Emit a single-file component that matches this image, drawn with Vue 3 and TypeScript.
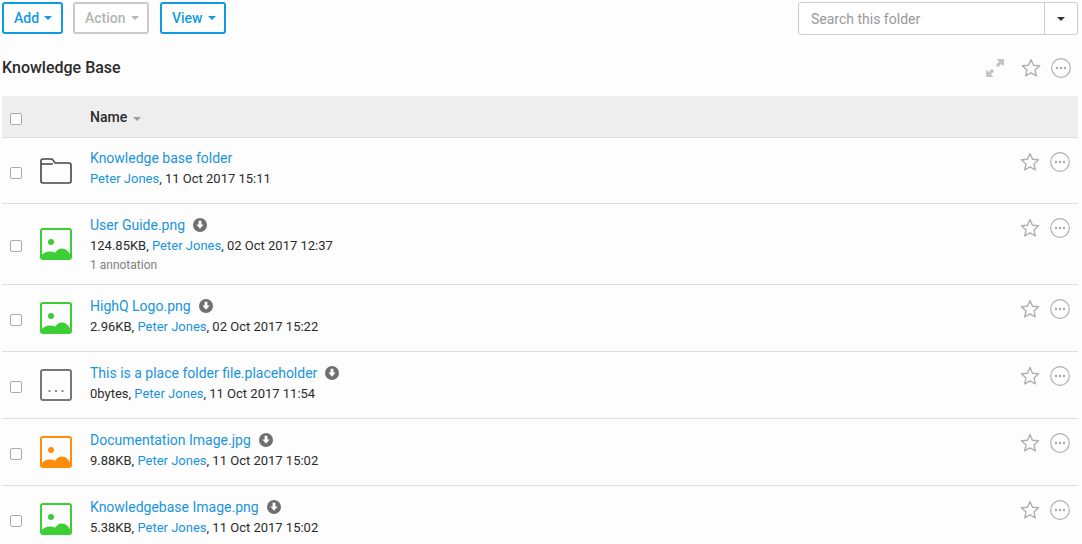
<script setup lang="ts">
interface Row {
  name: string
  kind: 'folder' | 'green' | 'orange' | 'other'
  size?: string
  date: string
  note?: string
}

const rows: Row[] = [
  { name: 'Knowledge base folder', kind: 'folder', date: '11 Oct 2017 15:11' },
  { name: 'User Guide.png', kind: 'green', size: '124.85KB', date: '02 Oct 2017 12:37', note: '1 annotation' },
  { name: 'HighQ Logo.png', kind: 'green', size: '2.96KB', date: '02 Oct 2017 15:22' },
  { name: 'This is a place folder file.placeholder', kind: 'other', size: '0bytes', date: '11 Oct 2017 11:54' },
  { name: 'Documentation Image.jpg', kind: 'orange', size: '9.88KB', date: '11 Oct 2017 15:02' },
  { name: 'Knowledgebase Image.png', kind: 'green', size: '5.38KB', date: '11 Oct 2017 15:02' }
]

const starPath = 'M10 1.6l2.5 5.6 6.1.6-4.6 4.1 1.3 6-5.3-3.1-5.3 3.1 1.3-6L1.4 7.8l6.1-.6z'
</script>

<template>
  <div class="page">
    <div class="toolbar">
      <div class="btns">
        <button class="btn">Add<i class="caret"></i></button>
        <button class="btn off">Action<i class="caret"></i></button>
        <button class="btn">View<i class="caret"></i></button>
      </div>
      <div class="search">
        <span class="placeholder">Search this folder</span>
        <span class="search-drop"><i class="caret dark"></i></span>
      </div>
    </div>

    <div class="title-row">
      <h1>Knowledge Base</h1>
      <div class="title-tools">
        <svg class="expand" width="20" height="20" viewBox="0 0 20 20">
          <path fill="#c4c4c4" d="M11.500 1h7.500v7.500l-2.600-2.600-3.300 3.300-2.300-2.300 3.300-3.300zM8.500 19H1v-7.500l2.600 2.600 3.300-3.300 2.300 2.300-3.300 3.300z" />
        </svg>
        <svg class="star" width="20" height="20" viewBox="0 0 20 20">
          <path :d="starPath" fill="none" stroke="#b0b0b0" stroke-width="1.400" stroke-linejoin="round" />
        </svg>
        <svg class="more" width="20" height="20" viewBox="0 0 20 20">
          <circle cx="10" cy="10" r="9.300" fill="none" stroke="#b0b0b0" stroke-width="1.200" />
          <circle cx="6" cy="10" r="1.200" fill="#a8a8a8" />
          <circle cx="10" cy="10" r="1.200" fill="#a8a8a8" />
          <circle cx="14" cy="10" r="1.200" fill="#a8a8a8" />
        </svg>
      </div>
    </div>

    <div class="thead">
      <span class="check"></span>
      <span class="name-head">Name<i class="caret grey"></i></span>
    </div>

    <div v-for="row in rows" :key="row.name" class="row" :class="{ tall: row.note, first: row.kind === 'folder' }">
      <span class="check"></span>
      <div class="file-icon">
        <svg v-if="row.kind === 'folder'" width="32" height="26" viewBox="0 0 32 26">
          <path d="M1 6V3a2 2 0 0 1 2-2h8c.9 0 1.500.4 2 1.100L15 5h14a2 2 0 0 1 2 2v16a2 2 0 0 1-2 2H3a2 2 0 0 1-2-2zM1 6h12" fill="none" stroke="#444" stroke-width="1.600" />
        </svg>
        <svg v-else-if="row.kind === 'other'" width="32" height="32" viewBox="0 0 32 32">
          <rect x="1" y="1" width="30" height="30" rx="2" fill="none" stroke="#777" stroke-width="2" />
          <circle cx="9.500" cy="22" r="1.100" fill="#777" />
          <circle cx="16" cy="22" r="1.100" fill="#777" />
          <circle cx="22.500" cy="22" r="1.100" fill="#777" />
        </svg>
        <svg v-else width="32" height="32" viewBox="0 0 32 32" :class="row.kind">
          <rect x="1" y="1" width="30" height="30" rx="2" fill="none" stroke="currentColor" stroke-width="2" />
          <circle cx="11" cy="14" r="3" fill="currentColor" />
          <path d="M1 31v-3c2-2.500 5-4.500 9-4.500 2 0 3.500.5 5 1.200 2-2.700 4-4.200 7-4.200 4 0 7 3 9 8V31z" fill="currentColor" />
        </svg>
      </div>
      <div class="info">
        <div class="file-name">
          <a>{{ row.name }}</a>
          <svg v-if="row.kind !== 'folder'" class="dl" width="14" height="14" viewBox="0 0 14 14">
            <circle cx="7" cy="7" r="7" fill="#6f6f6f" />
            <path d="M5.600 2.800h2.800v3.700h2.200L7 10.800 3.400 6.500h2.200z" fill="#fff" />
          </svg>
        </div>
        <div class="meta"><template v-if="row.size">{{ row.size }}, </template><a>Peter Jones</a>, {{ row.date }}</div>
        <div v-if="row.note" class="note">{{ row.note }}</div>
      </div>
      <div class="row-tools">
        <svg width="20" height="20" viewBox="0 0 20 20">
          <path :d="starPath" fill="none" stroke="#b0b0b0" stroke-width="1.400" stroke-linejoin="round" />
        </svg>
        <svg width="20" height="20" viewBox="0 0 20 20">
          <circle cx="10" cy="10" r="9.300" fill="none" stroke="#b0b0b0" stroke-width="1.200" />
          <circle cx="6" cy="10" r="1.200" fill="#a8a8a8" />
          <circle cx="10" cy="10" r="1.200" fill="#a8a8a8" />
          <circle cx="14" cy="10" r="1.200" fill="#a8a8a8" />
        </svg>
      </div>
    </div>
  </div>
</template>

<style>
html, body {
  background: #fdfdfd;
  overflow: hidden;
}
</style>

<style scoped>
.page {
  height: 544px;
  overflow: hidden;
  padding: 2px 4px 0 2px;
  box-sizing: border-box;
  font-family: Roboto, "Liberation Sans", sans-serif;
  font-size: 14px;
  color: #2b2b2b;
}

.toolbar {
  display: flex;
  justify-content: space-between;
  align-items: flex-start;
}

.btns {
  display: flex;
  gap: 10px;
}

.btn {
  height: 32px;
  padding: 0 10px;
  border: 2px solid #0f9be0;
  border-radius: 3px;
  background: #fff;
  color: #0f9be0;
  font: 500 14px Roboto, sans-serif;
  display: flex;
  align-items: center;
}
.btn:nth-child(1) { width: 61px; }
.btn:nth-child(2) { width: 76px; margin-right: 1px; }
.btn:nth-child(3) { width: 66px; }

.btn.off {
  border-color: #cacaca;
  color: #b5b5b5;
}

.caret {
  display: inline-block;
  margin-left: 5px;
  border-top: 4px solid currentColor;
  border-left: 4px solid transparent;
  border-right: 4px solid transparent;
}
.caret.dark { color: #333; margin: 0; }
.caret.grey { color: #999; margin-left: 6px; position: relative; top: -1px; }

.search {
  width: 280px;
  height: 33px;
  border: 1px solid #ccc;
  border-radius: 3px;
  background: #fff;
  box-sizing: border-box;
  display: flex;
  align-items: center;
}

.placeholder {
  flex: 1;
  padding-left: 12px;
  color: #999;
}

.search-drop {
  width: 32px;
  height: 100%;
  border-left: 1px solid #ccc;
  display: flex;
  align-items: center;
  justify-content: center;
}

.title-row {
  height: 61px;
  padding-top: 4px;
  box-sizing: border-box;
  display: flex;
  justify-content: space-between;
  align-items: center;
}

h1 {
  margin: 0;
  font-size: 16px;
  font-weight: 500;
  color: #2b2b2b;
}

.title-tools {
  display: flex;
  align-items: center;
  padding-right: 7px;
}
.star { margin-left: 16px; }
.more { margin-left: 10px; }

.thead {
  height: 42px;
  background: #eee;
  border-bottom: 1px solid #ddd;
  box-sizing: border-box;
  display: flex;
  align-items: center;
}

.check {
  flex: none;
  width: 12px;
  height: 12px;
  margin: 4px 0 0 8px;
  box-sizing: border-box;
  border: 1px solid #aaa;
  border-radius: 2px;
  background: #fff;
}

.name-head {
  margin-left: 68px;
  font-weight: 500;
  color: #2b2b2b;
}

.row {
  height: 67px;
  border-bottom: 1px solid #ddd;
  box-sizing: border-box;
  display: flex;
  align-items: center;
}
.row.first { height: 66px; }
.row.tall { height: 81px; }

.file-icon {
  flex: none;
  width: 32px;
  margin-left: 18px;
  display: flex;
  justify-content: center;
}
.green { color: #3bce35; }
.orange { color: #ff8c0a; }

.info {
  flex: 1;
  margin-left: 18px;
  line-height: 20px;
  align-self: flex-start;
  padding-top: 11px;
}
.first .info { padding-top: 10px; }

a {
  color: #1a94dc;
}

.file-name {
  display: flex;
  align-items: center;
  gap: 8px;
  height: 20px;
}

.meta {
  margin-top: 1px;
  font-size: 13px;
}

.note {
  margin-top: -1px;
  font-size: 12px;
  color: #808080;
}

.row-tools {
  display: flex;
  align-items: center;
  gap: 10px;
  padding-right: 8px;
  align-self: flex-start;
  padding-top: 14px;
}
</style>
